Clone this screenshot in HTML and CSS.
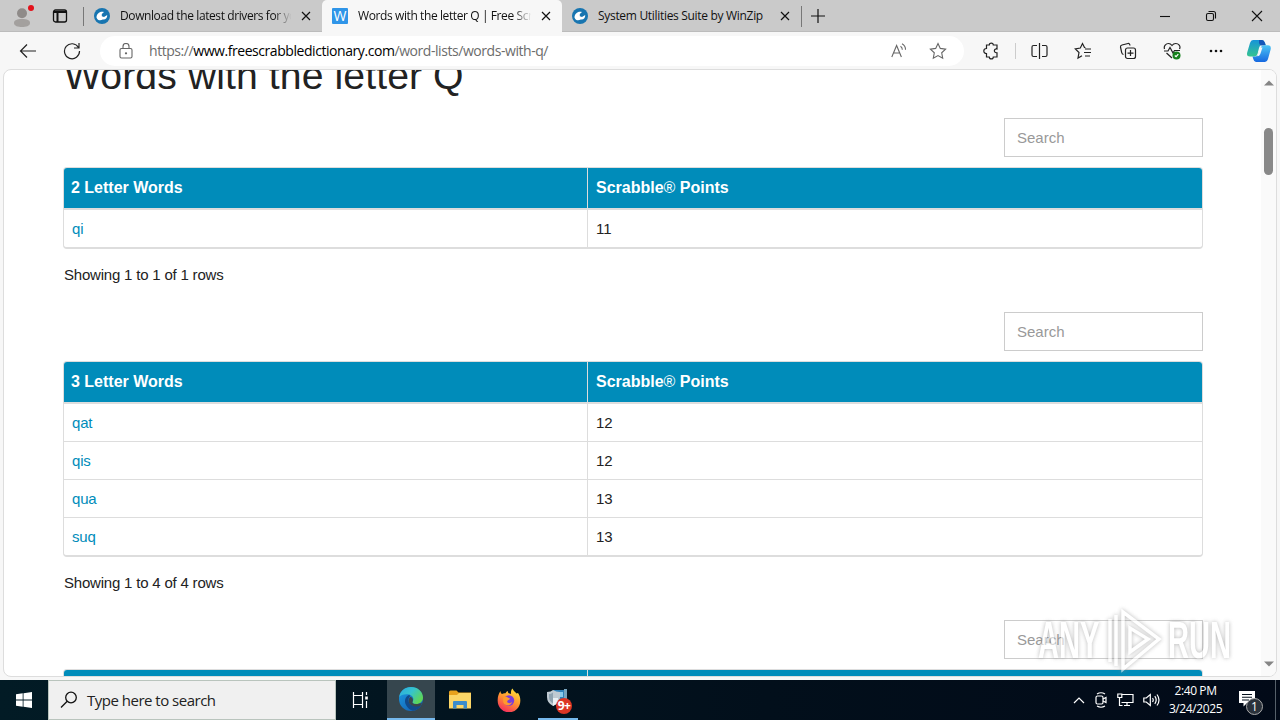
FILE: index.html
```html
<!DOCTYPE html>
<html>
<head>
	<meta charset="utf-8">
	<title>Words with the letter Q</title>
	<link rel="stylesheet" href="styles.css">
</head>
<body>

	<!-- Tab strip -->
	<div class="tabs">
		<div class="profile">
			<svg width="22" height="24" viewBox="0 0 22 24"><circle cx="9" cy="9.300" r="5" fill="#8f8b89"/><path d="M1 19c0-3 3-4 8-4s8 1 8 4-4 4-8 4-8-1-8-4z" fill="#a3a09e"/><circle cx="18" cy="4" r="3" fill="#e3121b"/></svg>
		</div>
		<div class="workspaces">
			<svg width="16" height="16" viewBox="0 0 16 16" fill="none" stroke="#111" stroke-width="1.300"><rect x="1.500" y="2" width="13" height="12" rx="2"/><path d="M1.500 4h13M5.500 4v10" stroke-width="2"/></svg>
		</div>
		<div class="tab tab1">
			<svg class="fav" viewBox="0 0 16 16"><circle cx="8" cy="8" r="8" fill="#1875b0"/><path d="M2.500 9.500C2.500 5.500 6 2.800 10 4L7.800 6v2.200l2.200.8 3.200-2c.3 3-1.700 5-4.500 4.500C6.500 13 3.500 12.500 2.500 9.500z" fill="#fff"/></svg>
			<span class="tabtext">Download the latest drivers for yo</span>
			<svg class="x" viewBox="0 0 10 10"><path d="M1 1l8 8M9 1l-8 8"/></svg>
		</div>
		<div class="tab active">
			<span class="fav wicon">W</span>
			<span class="tabtext">Words with the letter Q | Free Scr</span>
			<svg class="x" viewBox="0 0 10 10"><path d="M1 1l8 8M9 1l-8 8"/></svg>
		</div>
		<div class="tab tab3">
			<svg class="fav" viewBox="0 0 16 16"><circle cx="8" cy="8" r="8" fill="#1875b0"/><path d="M2.500 9.500C2.500 5.500 6 2.800 10 4L7.800 6v2.200l2.200.8 3.200-2c.3 3-1.700 5-4.500 4.500C6.500 13 3.500 12.500 2.500 9.500z" fill="#fff"/></svg>
			<span class="tabtext">System Utilities Suite by WinZip</span>
			<svg class="x" viewBox="0 0 10 10"><path d="M1 1l8 8M9 1l-8 8"/></svg>
		</div>
		<div class="newtab">
			<svg width="14" height="14" viewBox="0 0 14 14" stroke="#111" stroke-width="1.200"><path d="M7 0v14M0 7h14"/></svg>
		</div>
		<div class="winbuttons">
			<svg width="12" height="12" viewBox="0 0 12 12"><path d="M1 6.500h10"/></svg>
			<svg width="12" height="12" viewBox="0 0 12 12"><rect x="1.500" y="3.500" width="7" height="7" rx="1.500"/><path d="M3.500 1.500h5a2 2 0 0 1 2 2v5"/></svg>
			<svg width="12" height="12" viewBox="0 0 12 12"><path d="M1 1l10 10M11 1L1 11"/></svg>
		</div>
	</div>

	<!-- Address bar -->
	<div class="toolbar">
		<div class="nav">
			<svg width="18" height="16" viewBox="0 0 18 16"><path d="M17 8H1.500M8 1.500L1.500 8 8 14.500"/></svg>
		</div>
		<div class="nav reload">
			<svg width="18" height="18" viewBox="0 0 18 18"><path d="M15.500 5.500A7.500 7.500 0 1 0 16.500 9M16 1v5h-5"/></svg>
		</div>
		<div class="address">
			<svg class="lock" width="14" height="16" viewBox="0 0 14 16"><rect x="1" y="5.500" width="12" height="9.500" rx="1.500"/><path d="M4 5.500V3.500a3 3 0 0 1 6 0v2"/><circle cx="7" cy="10.300" r=".6"/></svg>
			<div class="url"><span>https://</span><b>www.freescrabbledictionary.com</b><span>/word-lists/words-with-q/</span></div>
			<svg class="read" width="16" height="15" viewBox="0 0 16 15"><path d="M.8 14L5.600 2.500 10.400 14M2.500 10h6.200M9.500 3.200a4 4 0 0 1 1.800 3.500M11 .8a6.500 6.500 0 0 1 3.500 6"/></svg>
			<svg class="star" width="18" height="18" viewBox="0 0 18 18"><path d="M9 1.500l2.300 4.900 5.300.7-3.900 3.700 1 5.400L9 13.600l-4.700 2.600 1-5.400L1.400 7.100l5.300-.7z"/></svg>
		</div>
		<div class="tools">
			<div class="tool ext"><svg width="16" height="18" viewBox="0 0 16 18"><path d="M3.500 3h2.800c0-2.600 4-2.600 4 0H14v4c-3-.8-4 4 0 3.800V15h-3.700c0 2.600-4 2.600-4 0H3.500v-3.500c-3.600 0-3.600-5 0-5z"/></svg></div>
			<div class="sep"></div>
			<div class="tool"><svg width="18" height="18" viewBox="0 0 18 18"><path d="M9.500 1v16M7 3.500H3.500q-1.500 0-1.500 1.500v8q0 1.500 1.500 1.500H7M12 3.500h3.500q1.500 0 1.500 1.500v8q0 1.500-1.500 1.500H12"/></svg></div>
			<div class="tool"><svg width="18" height="18" viewBox="0 0 18 18"><path d="M11.500 5.800l-1-.3-2-4L6.300 6l-5 .8L5 10.500 4 16l4-2.200M11 7h6M10 10.500h7M11 14h5"/></svg></div>
			<div class="tool"><svg width="18" height="18" viewBox="0 0 18 18"><path d="M4.500 12.500q-1.500-.3-1.800-2L1.500 5Q1.200 3.500 3 3l6-1.500q1.600-.3 2 2"/><rect x="6.500" y="6" width="10" height="10.500" rx="2"/><path d="M11.500 8v6M8.500 11.200h6"/></svg></div>
			<div class="tool"><svg width="18" height="18" viewBox="0 0 18 18"><path d="M1.500 7C.5 4 3 1.500 5.500 1.500 7.500 1.500 9 3.500 9 3.500s1.500-2 3.700-2C15.500 1.500 18 4 16.500 7M3.500 11L9 16M1 9h4l2-3.500L10 11l1.500-2.500H17"/><circle cx="13.500" cy="13.500" r="4" fill="#15801b" stroke="none"/><path d="M11.800 13.500l1.300 1.200 2.200-2.500" stroke="#fff"/></svg></div>
			<div class="tool"><svg width="14" height="4" viewBox="0 0 14 4"><g fill="#111" stroke="none"><circle cx="2" cy="2" r="1.300"/><circle cx="7" cy="2" r="1.300"/><circle cx="12" cy="2" r="1.300"/></g></svg></div>
			<div class="tool copilot"><svg width="24" height="24" viewBox="0 0 24 24" stroke="none">
				<defs>
					<linearGradient id="cp1" x1="0" y1="0" x2="0" y2="1"><stop offset="0" stop-color="#1694d9"/><stop offset="1" stop-color="#35c490"/></linearGradient>
					<linearGradient id="cp2" x1="0" y1="0" x2="0" y2="1"><stop offset="0" stop-color="#4cc5f5"/><stop offset="1" stop-color="#1668e0"/></linearGradient>
				</defs>
				<path d="M6 1h9q2 0 3 3l.7 2h-4q-2 0-2.700 3l-1.500 6q-.8 2.500-3 2.500H3Q-.8 17.500.2 13.500L3 4q.8-3 3-3z" fill="url(#cp1)"/>
				<path d="M12 1h3q2 0 3 3l.7 2.500h-4q-2 0-2.700-2.500z" fill="#1557b8"/>
				<path d="M17 6.300h4q3.300 0 2.700 4L21 20q-.8 3-3 3H9q-2 0-2.700-3l-.8-2.500h3q2 0 2.700-2.500l2.300-6q.8-2.700 3.500-2.700z" fill="url(#cp2)"/>
				<path d="M12.800 8.500h2.700l-2.200 6.500q-.8 2.300-3 2.300z" fill="#f7f7f7"/>
			</svg></div>
		</div>
	</div>

	<!-- Web page -->
	<div class="frame">
		<div class="page">
			<h1>Words with the letter Q</h1>

			<input class="search" type="text" placeholder="Search">
			<div class="words">
				<div class="row head"><div class="col1">2 Letter Words</div><div class="col2">Scrabble<i>®</i> Points</div></div>
				<div class="row"><div class="col1"><a>qi</a></div><div class="col2">11</div></div>
			</div>
			<div class="showing">Showing 1 to 1 of 1 rows</div>

			<input class="search" type="text" placeholder="Search">
			<div class="words">
				<div class="row head"><div class="col1">3 Letter Words</div><div class="col2">Scrabble<i>®</i> Points</div></div>
				<div class="row"><div class="col1"><a>qat</a></div><div class="col2">12</div></div>
				<div class="row"><div class="col1"><a>qis</a></div><div class="col2">12</div></div>
				<div class="row"><div class="col1"><a>qua</a></div><div class="col2">13</div></div>
				<div class="row"><div class="col1"><a>suq</a></div><div class="col2">13</div></div>
			</div>
			<div class="showing">Showing 1 to 4 of 4 rows</div>

			<input class="search" type="text" placeholder="Search">
			<div class="words">
				<div class="row head"><div class="col1"></div><div class="col2"></div></div>
			</div>
		</div>
		<div class="scrollbar">
			<svg width="10" height="6" viewBox="0 0 10 6"><path d="M0 5.500L5 .5l5 5z" fill="#858585"/></svg>
			<div class="thumb"></div>
			<svg class="down" width="10" height="6" viewBox="0 0 10 6"><path d="M0 .5l5 5 5-5z" fill="#858585"/></svg>
		</div>
	</div>

	<!-- Watermark over the page -->
	<div class="watermark">
		<span>ANY</span>
		<svg width="58" height="68" viewBox="0 0 58 68" fill="none"><path d="M4 56V13M10 60V9M17 50V6L53 33 17 63V50M24 46V22L42 33z" stroke="#fff" stroke-width="3.500"/></svg>
		<span>RUN</span>
	</div>

	<!-- Taskbar -->
	<div class="taskbar">
		<div class="start"><svg width="16" height="16" viewBox="0 0 16 16" fill="#fff"><path d="M0 2.300L6.700 1.300V7.600H0zM7.500 1.200L16 0v7.600H7.500zM0 8.400h6.700v6.300L0 13.700zM7.500 8.400H16V16l-8.500-1.200z"/></svg></div>
		<div class="tasksearch">
			<svg width="18" height="18" viewBox="0 0 18 18" fill="none" stroke="#111" stroke-width="1.300"><circle cx="11" cy="6.500" r="5.300"/><path d="M7.200 10.300L1 16.500"/></svg>
			<span>Type here to search</span>
		</div>
		<div class="app taskview"><svg width="17" height="16" viewBox="0 0 17 16" fill="none" stroke="#fff" stroke-width="1.200"><path d="M1.500 0v3.500h9V0M1.500 16v-3.500h9V16M1.500 3.500v9M10.500 3.500v9M14.500 0v3M14.500 9v7"/><path d="M13.200 4.500h2.600v3h-2.600z" fill="#fff" stroke="none"/></svg></div>
		<div class="app edge"><svg width="26" height="26" viewBox="0 0 26 26">
			<defs>
				<linearGradient id="e1" x1="0" y1="0" x2="1" y2=".6"><stop offset="0" stop-color="#2ba9e0"/><stop offset=".5" stop-color="#35c3cf"/><stop offset="1" stop-color="#5fd654"/></linearGradient>
				<linearGradient id="e2" x1="0" y1="0" x2="1" y2="1"><stop offset="0" stop-color="#1b9be3"/><stop offset="1" stop-color="#1257ab"/></linearGradient>
			</defs>
			<circle cx="13" cy="13" r="12" fill="url(#e2)"/>
			<path d="M1.200 11C2 5 7 1 13 1c7 0 12 5 12 10.500 0 4-3 6.500-6.500 6.500-3 0-4.500-1-4-2 2-3 .5-6.500-3.500-7.500C7 7.500 2.500 9 1.200 11z" fill="url(#e1)"/>
			<path d="M11.500 8.700C7 10.500 6 15 8 19c1.500 3 4 5.300 7 5.800 4-.6 7-3 8.500-5.800-3.500 2-12 1.500-13-4-.3-2 .3-3.500 1.500-4.500z" fill="#114a8b"/>
			<path d="M14.500 16c-.5 1 1 2.500 5 2l4.500-1-1 2.500c-4 2-11.500 1-12.300-4-.3-2 .5-4 1.800-4.800 2.500 1 3 3.300 2 5.300z" fill="#39464d"/>
		</svg></div>
		<div class="app"><svg width="22" height="20" viewBox="0 0 22 20"><path d="M0 2q0-1.500 1.500-1.500h6l2 2H22V9H0z" fill="#e8a21d"/><path d="M0 5h8l2-2h12v15.500H0z" fill="#fcd667"/><path d="M4 18.500V12q0-1 1-1h12q1 0 1 1v6.500h-3.500V15h-7v3.500z" fill="#3b8ccc"/></svg></div>
		<div class="app"><svg width="24" height="24" viewBox="0 0 24 24">
			<defs><linearGradient id="ff" x1=".8" y1="0" x2=".3" y2="1"><stop offset="0" stop-color="#ffe63b"/><stop offset=".5" stop-color="#ff9430"/><stop offset="1" stop-color="#f52a5e"/></linearGradient></defs>
			<path d="M3.500 3c0 1.500.5 2.500 1.500 3 1-.8 2.500-1 3.500-.8C9 4 10 3.200 11 3c-.5 1 0 1.800.7 2.200L14 6c-.3-2.500.3-4.500 1.500-5.500 1 2.500 3 3.500 4 5l1.500-.5C22.500 7 23.500 10 23.300 13A11.300 11.300 0 0 1 .7 13C.5 9 1.500 6 3.500 3z" fill="url(#ff)"/>
			<circle cx="12" cy="12.500" r="5.200" fill="#7a3ddb"/>
			<path d="M6 10c2-2 4-1 5.500 0 1.500.2 2 1 .5 1.800-1 .3-2 1-1.800 2.200.8 1.500 3.500 1.500 5 0-1 4-7.500 4.500-9 0z" fill="#ff9a2d"/>
		</svg></div>
		<div class="app running">
			<svg width="24" height="24" viewBox="0 0 24 24"><path d="M7 2h12v9H9z" fill="#2f81ba"/><path d="M9 4h8v5H9z" fill="#89cbed"/><path d="M18 1h3v13h-3z" fill="#78a4be"/><path d="M1 4q4 0 6-2 3 2 7 2v5q0 6-7 9-6-3-6-9z" fill="#bfcad2"/><path d="M3 6q2 0 4-1.500v11Q3 13 3 9z" fill="#8fa3b1"/><path d="M7 10h5v5l-5 3z" fill="#e9f0f4"/></svg>
			<span class="badge">9+</span>
		</div>
		<div class="tray">
			<svg width="12" height="8" viewBox="0 0 12 8"><path d="M1 7l5-5 5 5"/></svg>
			<svg width="14" height="18" viewBox="-1 0 14 18"><rect x="1" y="5" width="7" height="8" rx="1.500"/><path d="M8 8l3-1.500v5L8 10M2 3q4-2.500 8 0M2 15q4 2.500 8 0"/></svg>
			<svg width="17" height="14" viewBox="0 0 17 14"><path d="M5 1.500h11v8H4.500M10 9.500v3M7 12.500h6M.8 1h4v3.500h-4zM2.500 4.500v8h3"/></svg>
			<svg width="17" height="14" viewBox="0 0 17 14"><path d="M.8 5h2.500l4-3.500v11l-4-3.500H.8zM9.500 5q1.500 2 0 4M11.800 3.200q2.800 3.800 0 7.600M14 1.500q4 5.500 0 11"/></svg>
		</div>
		<div class="clock"><div>2:40 PM</div><div>3/24/2025</div></div>
		<div class="notify">
			<svg width="16" height="16" viewBox="0 0 16 16"><path d="M0 0h16v12H8l-3.500 3.500V12H0z" fill="#fff"/><path d="M3 3.500h10M3 6.200h10M3 9h7" stroke="#04101d" stroke-width="1.100"/></svg>
			<span class="count">1</span>
		</div>
	</div>

</body>
</html>
```
FILE: styles.css
```css
*{box-sizing:border-box;}
body{margin:0; width:1280px; height:720px; overflow:hidden; display:flex; flex-direction:column; position:relative; background-color:#f7f7f7; font-family:"Open Sans","Noto Sans",sans-serif; font-size:12px; color:#111;}
svg{display:block; flex:none;}

.tabs{height:32px; flex:none; display:flex; background-color:#cacaca; border-bottom:1px solid #bcbcbc;}
.profile{width:42px; padding:4px 0 0 13px;}
.workspaces{width:42px; padding:8px 0 0 10px;}
.tab{width:240px; height:32px; display:flex; align-items:center; padding:0 11px 0 10px; white-space:nowrap;}
.tab1{width:238px; position:relative;}
.tab1::before{content:""; position:absolute; left:-1px; top:7px; width:1px; height:19px; background-color:#777;}
.active{background-color:#f7f7f7; border-radius:5px 5px 0 0;}
.fav{width:16px; height:16px; flex:none;}
.wicon{background-color:#2f95e8; color:#fff; font-size:14px; line-height:16px; text-align:center; border-radius:1px;}
.tabtext{flex:1; overflow:hidden; margin:0 6px 0 10px; letter-spacing:-0.31px; line-height:20px;}
.tab1 .tabtext, .active .tabtext{-webkit-mask-image:linear-gradient(to right,#000 88%,transparent 98%);}
.tab1 .tabtext{letter-spacing:-0.4px;}
.active .tabtext{letter-spacing:-0.4px;}
.x{width:10px; height:10px; stroke:#111; stroke-width:1.2;}
.newtab{width:32px; display:flex; align-items:center; justify-content:center;}
.tab3{border-right:1px solid #888; border-image:linear-gradient(transparent 20%,#777 20%,#777 82%,transparent 82%) 1;}
.winbuttons{margin-left:auto; display:flex; align-items:center; gap:34px; padding-right:17px;}
.winbuttons svg{fill:none; stroke:#111; stroke-width:1.1;}

.toolbar{height:37px; flex:none; display:flex; align-items:center;}
.toolbar svg{fill:none; stroke:#222; stroke-width:1.2;}
.nav{width:56px; display:flex; justify-content:center;}
.reload{width:44px; padding-right:12px;}
.address{width:864px; height:30px; flex:none; display:flex; align-items:center; padding:0 17px 0 19px; background-color:#fff; border-radius:15px;}
.address svg{stroke:#666; stroke-width:1.1;}
.url{flex:1; display:flex; margin-left:16px; font-size:14px; letter-spacing:-0.44px; color:#6c6c6c;}
.url b{font-weight:normal; color:#000;}
.star{margin-left:22px;}
.tools{display:flex; align-items:center; flex:1;}
.tool{width:44.3px; flex:none; display:flex; justify-content:center;}
.toolbar .copilot svg{stroke:none;}
.tools .ext{width:51px; padding-left:3px;}
.sep{width:1px; flex:none; height:16px; margin-right:1px; background-color:#ccc;}
.tools .copilot{width:41px;}

.frame{height:608px; flex:none; margin:0 3px 0 3px; display:flex; overflow:hidden; background-color:#fff; border:1px solid #ddd; border-radius:8px; font-family:"Liberation Sans",Arial,sans-serif; font-size:15px; color:#222;}
.page{width:1139px; margin:-16px auto 0 60px; flex:none;}
h1{margin:0; font-size:39.2px; font-weight:normal; line-height:43px; letter-spacing:0.08px;}
.search{display:block; width:199px; height:39px; margin:20px 0 0 auto; padding:0 12px; border:1px solid #ccc; border-radius:0; font-family:inherit; font-size:15px; background-color:#fff;}
h1 + .search{margin-top:21px;}
.search::placeholder{color:#999; opacity:1;}
.words{margin:10px 0 0 -1px; border:1px solid #ddd; border-bottom-width:2px; border-radius:4px; overflow:hidden;}
.row{display:flex; height:38px; line-height:37px; border-top:1px solid #ddd;}
.head{height:40px; line-height:39px; border-top:0; background-color:#008cba; color:#fff; font-size:16px; font-weight:bold;}
.head i{font-style:normal; font-weight:normal;}
.head + .row{height:39px; border-top-width:2px;}
.col1{width:524px; padding-left:8px; border-right:1px solid #ddd;}
.head .col1{padding-left:7px;}
.col2{padding-left:8px;}
.col1 a{color:#008cba; letter-spacing:-0.2px;}
.showing{height:43px; padding-top:16px; line-height:20px; letter-spacing:-0.2px;}

.scrollbar{width:15px; flex:none; display:flex; flex-direction:column; align-items:center; padding:10px 0 9px; background-color:#fafafa;}
.thumb{width:9px; height:47px; margin-top:42px; border-radius:5px; background-color:#888;}
.down{margin-top:auto;}

.watermark{position:absolute; left:1038px; top:606px; height:68px; display:flex; align-items:center; gap:4px; color:#fff; font-family:"Liberation Sans",Arial,sans-serif; font-size:51px; font-weight:bold; opacity:0.6; filter:drop-shadow(0 0 2px #888);}
.watermark span{display:block; transform:scaleX(0.57); transform-origin:left; width:64px;}

.taskbar{height:40px; flex:none; margin-top:auto; display:flex; align-items:stretch; background:linear-gradient(to right,#021b25,#020f1b 60%,#020a18); color:#fff;}
.start{width:48px; display:flex; align-items:center; justify-content:center;}
.tasksearch{width:288px; display:flex; align-items:center; gap:9px; padding-left:11px; background-color:#f0f0f0; border:1px solid #b9c4bd; color:#222; font-size:15px; letter-spacing:-0.5px;}
.app{width:49px; display:flex; align-items:center; justify-content:center; position:relative;}
.taskview{width:51px; padding-right:2px;}
.edge{width:48px; background-color:#36464e; border-bottom:2px solid #76b9ed;}
.running::after{content:""; position:absolute; left:5px; bottom:0; width:40px; height:2px; background-color:#76b9ed;}
.badge{position:absolute; left:23px; top:18px; width:16px; height:16px; border-radius:8px; background-color:#dc3524; font-size:12px; font-weight:bold; line-height:16px; text-align:center; letter-spacing:-0.5px;}
.tray{margin-left:auto; display:flex; align-items:center; gap:9px;}
.tray svg{fill:none; stroke:#fff; stroke-width:1.2;}
.clock{width:71px; padding-top:2px; text-align:center; line-height:18px; letter-spacing:-0.4px;}
.notify{width:45px; margin-right:4px; padding:11px 0 0 8px; border-right:1px solid #56606a; position:relative;}
.count{position:absolute; left:15px; top:18px; width:17px; height:17px; border:1px solid #aaa; border-radius:9px; background-color:#2b323b; font-size:12px; line-height:15px; text-align:center;}
```
